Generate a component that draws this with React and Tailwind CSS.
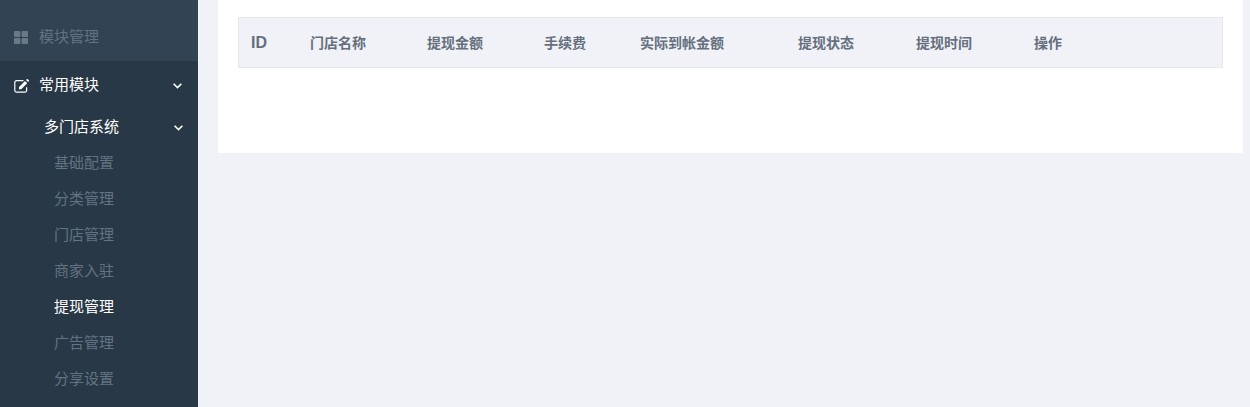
const subItems = [
  { label: '基础配置' },
  { label: '分类管理' },
  { label: '门店管理' },
  { label: '商家入驻' },
  { label: '提现管理', active: true },
  { label: '广告管理' },
  { label: '分享设置' },
];

const columns = [
  { label: 'ID', width: 'w-[59px]', big: true },
  { label: '门店名称', width: 'w-[117px]' },
  { label: '提现金额', width: 'w-[117px]' },
  { label: '手续费', width: 'w-[96px]' },
  { label: '实际到帐金额', width: 'w-[158px]' },
  { label: '提现状态', width: 'w-[118px]' },
  { label: '提现时间', width: 'w-[118px]' },
  { label: '操作', width: 'w-[100px]' },
];

// fa-th-large, four soft tiles
function TilesIcon() {
  return (
    <svg viewBox="0 0 14 13" className="h-[13px] w-[14px] shrink-0 fill-[#6b7986]">
      <rect x="0" y="0" width="6.4" height="5.9" rx="1" />
      <rect x="7.6" y="0" width="6.4" height="5.9" rx="1" />
      <rect x="0" y="7.1" width="6.4" height="5.9" rx="1" />
      <rect x="7.6" y="7.1" width="6.4" height="5.9" rx="1" />
    </svg>
  );
}

// fa-pencil-square-o, outlined square with a diagonal pen
function EditIcon() {
  return (
    <svg viewBox="0 0 15 14" className="h-[14px] w-[15px] shrink-0">
      <path
        d="M9.5 1.7H2.6A1.8 1.8 0 0 0 .8 3.5v7.9a1.8 1.8 0 0 0 1.8 1.8h8.2a1.8 1.8 0 0 0 1.8-1.8V8.2"
        fill="none"
        stroke="#fff"
        strokeWidth="1.2"
      />
      <path d="M5 8 11 2l2.2 2.2-6 6H5z" fill="#fff" />
      <path d="M12 1 12.8.3a.8.8 0 0 1 1.1 0l.9.9a.8.8 0 0 1 0 1.1l-.7.8z" fill="#fff" />
    </svg>
  );
}

function Chevron() {
  return (
    <svg viewBox="0 0 9 6" className="h-[6px] w-[9px] shrink-0" fill="none" stroke="#fff" strokeWidth="1.6">
      <path d="M.6.8 4.5 4.6 8.4.8" />
    </svg>
  );
}

export default function App() {
  return (
    <div className="flex h-[407px] w-[1250px] overflow-hidden bg-[#f0f2f7] font-['Liberation_Sans','Noto_Sans_CJK_SC',sans-serif]">
      <aside className="w-[198px] shrink-0 bg-[#293846] text-[15px]">
        <div className="flex h-[61px] items-end bg-[#324354] pb-[11px] pl-[14px] text-[#627383]">
          <div className="flex h-[25px] items-center">
            <TilesIcon />
            <span className="ml-[11px]">模块管理</span>
          </div>
        </div>

        <div className="flex h-[49px] items-center pl-[14px] pr-[16px] text-white">
          <EditIcon />
          <span className="ml-[10px] flex-1">常用模块</span>
          <Chevron />
        </div>

        <div className="flex h-[35px] items-center pl-[44px] pr-[15px] text-white">
          <span className="flex-1">多门店系统</span>
          <Chevron />
        </div>

        <ul>
          {subItems.map((item) => (
            <li
              key={item.label}
              className={`flex h-[36px] items-center pl-[54px] ${item.active ? 'text-white' : 'text-[#627383]'}`}
            >
              {item.label}
            </li>
          ))}
        </ul>
      </aside>

      <main className="flex-1 pl-[20px] pr-[7px]">
        <div className="h-[153px] bg-white px-[20px] pt-[17px]">
          <div className="flex h-[51px] items-center border border-[#e7e8ec] bg-[#f0f2f7] pl-[12px] pt-[1px] text-[14px] font-bold text-[#656f7d]">
            {columns.map((col) => (
              <div key={col.label} className={`${col.width} shrink-0 ${col.big ? 'text-[16px]' : ''}`}>
                {col.label}
              </div>
            ))}
          </div>
        </div>
      </main>
    </div>
  );
}
